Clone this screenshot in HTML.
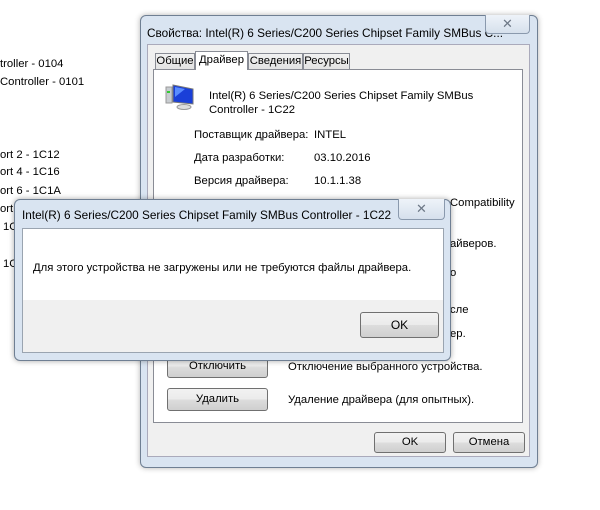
<!DOCTYPE html>
<html><head><meta charset="utf-8"><style>
*{margin:0;padding:0;box-sizing:border-box}
body{width:600px;height:510px;background:#fff;position:relative;overflow:hidden;font-family:"Liberation Sans","Noto Sans CJK SC",sans-serif;font-size:11.3px;color:#000}
.a{position:absolute;white-space:nowrap}
.btn{position:absolute;border:1px solid #707070;border-radius:3px;background:linear-gradient(#f2f2f2,#ebebeb 50%,#dddddd 51%,#cfcfcf);text-align:center;font-size:11.3px}
</style></head><body>
<div class="a" style="left:0;top:58px">troller - 0104</div>
<div class="a" style="left:0;top:76px">Controller - 0101</div>
<div class="a" style="left:0;top:149px">ort 2 - 1C12</div>
<div class="a" style="left:0;top:166px">ort 4 - 1C16</div>
<div class="a" style="left:0;top:185px">ort 6 - 1C1A</div>
<div class="a" style="left:0;top:203px">ort 8 - 1C1E</div>
<div class="a" style="left:3px;top:221px">1C</div>
<div class="a" style="left:3px;top:258px">1C</div>

<!-- properties window -->
<div class="a" style="left:140px;top:15px;width:398px;height:453px;background:#d9e4f1;border:1px solid #6f7f93;border-radius:6px;box-shadow:0 0 6px rgba(0,0,0,.3)"></div>
<div class="a" style="left:147px;top:26px;font-size:11.8px">Свойства: Intel(R) 6 Series/C200 Series Chipset Family SMBus C...</div>
<div class="a" style="left:485px;top:15px;width:45px;height:19px;border:1px solid #8a99ad;border-top:none;border-radius:0 0 4px 4px;background:linear-gradient(#eef3f9,#d6e0ec);color:#6d7886;text-align:center;font-size:13px;line-height:17px">✕</div>
<div class="a" style="left:147px;top:44px;width:383px;height:413px;background:#f0f0f0;border:1px solid #aab"></div>
<div class="a" style="left:153px;top:69px;width:370px;height:354px;background:#fff;border:1px solid #898c95"></div>
<div class="a" style="left:155px;top:53px;width:40px;height:17px;border:1px solid #898c95;background:linear-gradient(#f2f2f2,#e3e3e3);text-align:center;line-height:15px">Общие</div>
<div class="a" style="left:195px;top:51px;width:53px;height:19px;border:1px solid #898c95;border-bottom:none;background:#fff;text-align:center;line-height:17px">Драйвер</div>
<div class="a" style="left:248px;top:53px;width:55px;height:17px;border:1px solid #898c95;background:linear-gradient(#f2f2f2,#e3e3e3);text-align:center;line-height:15px">Сведения</div>
<div class="a" style="left:303px;top:53px;width:47px;height:17px;border:1px solid #898c95;background:linear-gradient(#f2f2f2,#e3e3e3);text-align:center;line-height:15px">Ресурсы</div>
<svg class="a" style="left:165px;top:83px" width="32" height="28" viewBox="0 0 32 28"><rect x="1" y="4" width="6" height="16" fill="#c8ccd0" stroke="#999"/><rect x="2" y="8" width="3" height="2" fill="#3c3"/><path d="M8 2 L28 6 L28 21 L8 19Z" fill="#1a3fd8" stroke="#777"/><path d="M10 4 L20 6 L10 14Z" fill="#5a8cff"/><ellipse cx="19" cy="24" rx="7" ry="2.5" fill="#ddd" stroke="#999"/></svg>
<div class="a" style="left:209px;top:89px;line-height:14px">Intel(R) 6 Series/C200 Series Chipset Family SMBus<br>Controller - 1C22</div>
<div class="a" style="left:194px;top:129px">Поставщик драйвера:</div><div class="a" style="left:314px;top:129px">INTEL</div>
<div class="a" style="left:194px;top:152px">Дата разработки:</div><div class="a" style="left:314px;top:152px">03.10.2016</div>
<div class="a" style="left:194px;top:175px">Версия драйвера:</div><div class="a" style="left:314px;top:175px">10.1.1.38</div>
<div class="a" style="left:450px;top:197px">Compatibility</div>
<div class="a" style="left:450px;top:238px">айверов.</div>
<div class="a" style="left:450px;top:267px">о</div>
<div class="a" style="left:450px;top:304px">сле</div>
<div class="a" style="left:450px;top:328px">ер.</div>
<div class="btn" style="left:167px;top:355px;width:101px;height:23px;line-height:21px">Отключить</div>
<div class="a" style="left:288px;top:361px">Отключение выбранного устройства.</div>
<div class="btn" style="left:167px;top:388px;width:101px;height:23px;line-height:21px">Удалить</div>
<div class="a" style="left:288px;top:394px">Удаление драйвера (для опытных).</div>
<div class="btn" style="left:374px;top:432px;width:72px;height:21px;line-height:19px">OK</div>
<div class="btn" style="left:453px;top:432px;width:72px;height:21px;line-height:19px">Отмена</div>

<!-- message dialog -->
<div class="a" style="left:14px;top:199px;width:437px;height:162px;background:#d9e4f1;border:1px solid #6f7f93;border-radius:6px;box-shadow:0 0 6px rgba(0,0,0,.35)"></div>
<div class="a" style="left:22px;top:208px;font-size:11.8px">Intel(R) 6 Series/C200 Series Chipset Family SMBus Controller - 1C22</div>
<div class="a" style="left:398px;top:199px;width:47px;height:21px;border:1px solid #8a99ad;border-top:none;border-radius:0 0 4px 4px;background:linear-gradient(#eef3f9,#d6e0ec);color:#6d7886;text-align:center;font-size:13px;line-height:19px">✕</div>
<div class="a" style="left:22px;top:228px;width:422px;height:125px;background:#f0f0f0;border:1px solid #9aa4b0"></div>
<div class="a" style="left:23px;top:229px;width:420px;height:71px;background:#fff"></div>
<div class="a" style="left:33px;top:262px">Для этого устройства не загружены или не требуются файлы драйвера.</div>
<div class="btn" style="left:360px;top:312px;width:79px;height:26px;line-height:24px;font-size:12px">OK</div>
</body></html>
